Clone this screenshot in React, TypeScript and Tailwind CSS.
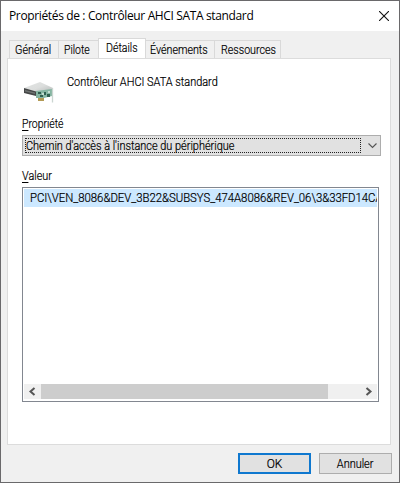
import React from 'react';

const tabs = [
  { label: 'Général', cls: 'w-[50px] pl-[5px]', fit: 'scale-x-[0.9]' },
  { label: 'Pilote', cls: 'w-[41px] -ml-px pl-[5px]', fit: 'scale-x-[0.87]' },
  { label: 'Détails', active: true, cls: 'w-[48px] -ml-px pl-[7px]', fit: 'scale-x-[0.88]' },
  { label: 'Événements', cls: 'w-[70px] -ml-px pl-1', fit: 'scale-x-[0.89]' },
  { label: 'Ressources', cls: 'w-[67px] -ml-px pl-[6px]', fit: 'scale-x-[0.89]' },
];

function DeviceIcon() {
  return (
    <svg width="32" height="24" viewBox="0 0 32 24" className="block">
      <defs>
        <linearGradient id="top" x1="0" y1="0" x2="1" y2="1">
          <stop offset="0" stopColor="#e2e4e3" />
          <stop offset="0.5" stopColor="#dcdedd" />
          <stop offset="1" stopColor="#b4b9b7" />
        </linearGradient>
      </defs>
      <path d="M2 8 L18 2 L31 8 L31 10 L14 13 Z" fill="url(#top)" />
      <path d="M2 8 L14 11.5 V16 L2 13 Z" fill="#454747" />
      <path d="M3 10 L13 12.5 V14 L3 11.5 Z" fill="#6f7371" />
      <path d="M14 11 L30 9 V16 L22 18 L14 18 Z" fill="#86b5a2" />
      <path d="M16 12h3v2h-3zM18 15h3v2h-3zM22 12h2v3h-2zM25 14h3v3h-3z" fill="#315f50" />
      <path d="M20 13h2v2h-2zM26 11h2v2h-2z" fill="#c4dcd0" />
      <path d="M16 18h6v3h-6z" fill="#b39a55" />
      <path d="M30.5 8v14.5" stroke="#cbd5d1" strokeWidth="1.3" />
    </svg>
  );
}

export default function App() {
  return (
    <div className="flex h-[483px] w-[400px] flex-col border border-[#6a696b] bg-[#f0f0f0] font-['Roboto','Liberation_Sans',sans-serif] text-[12px] leading-[14px] text-black">
      <header className="flex h-[30px] items-center justify-between bg-white pl-2 pr-[10px]">
        <h1 className="whitespace-nowrap font-['Open_Sans','Noto_Sans',sans-serif] text-[12px] leading-4 tracking-[-0.36px] text-black">
          Propriétés de : Contrôleur AHCI SATA standard
        </h1>
        <svg width="10" height="10" viewBox="0 0 10 10" className="block">
          <path d="M0 0 L10 10 M10 0 L0 10" stroke="#111" strokeWidth="1.1" />
        </svg>
      </header>

      <div className="mt-[7px] flex h-5 items-end pl-2 font-light [-webkit-text-stroke:0.2px_#000]">
        {tabs.map((t) => (
          <div
            key={t.label}
            className={`whitespace-nowrap border border-b-0 border-[#d9d9d9] ${t.cls} ${
              t.active ? 'z-10 h-5 bg-white pt-[2px]' : 'h-[18px] bg-[#f0f0f0] pt-[2px]'
            }`}
          >
            <span className={`inline-block origin-left ${t.fit}`}>{t.label}</span>
          </div>
        ))}
      </div>

      <main className="ml-[6px] flex h-[387px] w-[384px] flex-col border border-[#dcdcdc] bg-white pl-[14px] font-light [-webkit-text-stroke:0.2px_#000]">
        <div className="flex h-[58px] pt-4">
          <div className="pt-[5px]"><DeviceIcon /></div>
          <span className="ml-[13px] inline-block origin-left scale-x-[0.91] self-start whitespace-nowrap">
            Contrôleur AHCI SATA standard
          </span>
        </div>
        <label className="block h-[18px] origin-left scale-x-[0.87] self-start"><u className="underline-offset-2">P</u>ropriété</label>
        <div className="flex h-[21px] w-[359px] items-center border border-[#adadad] bg-[#e1e1e1] pl-[2px]">
          <div className="flex h-[15px] w-[336px] items-center whitespace-nowrap border border-dotted border-[#222]">
            <span className="inline-block origin-left scale-x-[0.91]">Chemin d'accès à l'instance du périphérique</span>
          </div>
          <svg width="9" height="6" viewBox="0 0 9 6" className="ml-[7px] block">
            <path d="M0.5 0.5 L4.5 4.5 L8.5 0.5" fill="none" stroke="#555" strokeWidth="1.1" />
          </svg>
        </div>
        <label className="mt-[13px] block h-[18px] origin-left scale-x-[0.9] self-start"><u className="underline-offset-2">V</u>aleur</label>
        <div className="flex h-[215px] w-[357px] flex-col justify-between border border-[#828790] p-px pb-[2px]">
          <div className="h-[18px] overflow-hidden whitespace-nowrap bg-[#cce8ff] pl-[6px] pt-[2px]">
            <span className="inline-block origin-left scale-x-[0.945]">
              PCI\VEN_8086&amp;DEV_3B22&amp;SUBSYS_474A8086&amp;REV_06\3&amp;33FD14CA
            </span>
          </div>
          <div className="flex h-[15px] items-center bg-[#f0f0f0]">
            <svg width="17" height="15" viewBox="0 0 17 15" className="block">
              <path d="M10.5 4 L6.5 7.5 L10.5 11" fill="none" stroke="#555" strokeWidth="2" />
            </svg>
            <div className="h-[15px] w-[287px] bg-[#cdcdcd]" />
            <svg width="17" height="15" viewBox="0 0 17 15" className="ml-auto block">
              <path d="M6.5 4 L10.5 7.5 L6.5 11" fill="none" stroke="#555" strokeWidth="2" />
            </svg>
          </div>
        </div>
      </main>

      <footer className="mt-2 flex justify-end gap-2 pr-[7px] font-light [-webkit-text-stroke:0.2px_#000]">
        <button className="h-[21px] w-[73px] border-2 border-[#0f78cf] bg-[#e1e1e1]">
          <span className="inline-block">OK</span>
        </button>
        <button className="h-[21px] w-[73px] border border-[#adadad] bg-[#e1e1e1]">
          <span className="inline-block scale-x-[0.91]">Annuler</span>
        </button>
      </footer>
    </div>
  );
}
